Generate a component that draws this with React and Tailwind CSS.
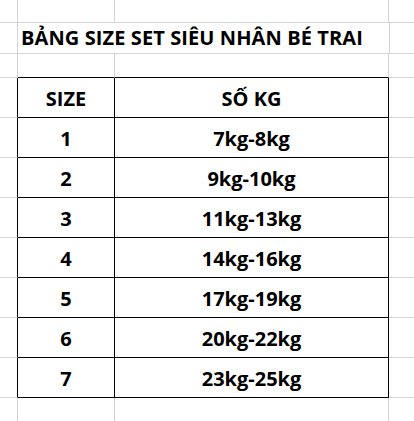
import React from "react";

const rows = [
  ["1", "7kg-8kg"],
  ["2", "9kg-10kg"],
  ["3", "11kg-13kg"],
  ["4", "14kg-16kg"],
  ["5", "17kg-19kg"],
  ["6", "20kg-22kg"],
  ["7", "23kg-25kg"],
];

const font = { fontFamily: '"Open Sans", "Noto Sans", sans-serif' };

export default function App() {
  return (
    <div
      className="w-[414px] h-[421px] overflow-hidden bg-white text-black"
      style={font}
    >
      {/* Row 1 */}
      <div className="flex h-[23px]">
        <div className="w-[18px] shrink-0 border-r border-b border-[#d4d4d4]" />
        <div className="w-[97px] shrink-0 border-r border-b border-[#d4d4d4]" />
        <div className="w-[274px] shrink-0 border-r border-b border-[#d4d4d4]" />
        <div className="flex-1 border-b border-[#d4d4d4]" />
      </div>
      {/* Row 2 - title */}
      <div className="flex h-[31px] relative">
        <div className="w-[18px] shrink-0 border-r border-b border-[#d4d4d4]" />
        <div className="w-[97px] shrink-0 border-b border-[#d4d4d4] relative">
          <span className="absolute left-[3px] top-[2px] whitespace-nowrap text-[20px] tracking-[0.1px] font-bold leading-[26px]">
            BẢNG SIZE SET SIÊU NHÂN BÉ TRAI
          </span>
        </div>
        <div className="w-[275px] shrink-0 border-r border-b border-[#d4d4d4]" />
        <div className="flex-1 border-b border-[#d4d4d4]" />
      </div>
      {/* Row 3 */}
      <div className="flex h-[24px]">
        <div className="w-[18px] shrink-0 border-r border-b border-[#d4d4d4]" />
        <div className="w-[97px] shrink-0 border-r border-[#d4d4d4] border-b border-b-black" />
        <div className="w-[274px] shrink-0 border-r border-[#d4d4d4] border-b border-b-black" />
        <div className="flex-1 border-b border-[#d4d4d4]" />
      </div>
      {/* Header */}
      <div className="flex h-[40px]">
        <div className="w-[18px] shrink-0 border-r border-r-black border-b border-b-[#d4d4d4]" />
        <div className="w-[97px] shrink-0 border-r border-b border-black flex items-center justify-center pt-[3px] text-[20px] font-bold">
          SIZE
        </div>
        <div className="w-[274px] shrink-0 border-r border-b border-black flex items-center justify-center pt-[3px] text-[20px] font-bold">
          SỐ KG
        </div>
        <div className="flex-1 border-b border-[#d4d4d4]" />
      </div>
      {rows.map(([s, kg]) => (
        <div key={s} className="flex h-[40px]">
          <div className="w-[18px] shrink-0 border-r border-r-black border-b border-b-[#d4d4d4]" />
          <div className="w-[97px] shrink-0 border-r border-b border-black flex items-center justify-center pt-[3px] text-[20px] font-bold">
            {s}
          </div>
          <div className="w-[274px] shrink-0 border-r border-b border-black flex items-center justify-center pt-[3px] text-[20px] font-bold">
            {kg}
          </div>
          <div className="flex-1 border-b border-[#d4d4d4]" />
        </div>
      ))}
      {/* Bottom row */}
      <div className="flex h-[30px]">
        <div className="w-[18px] shrink-0 border-r border-[#d4d4d4]" />
        <div className="w-[97px] shrink-0 border-r border-[#d4d4d4]" />
        <div className="w-[274px] shrink-0 border-r border-[#d4d4d4]" />
        <div className="flex-1" />
      </div>
    </div>
  );
}
